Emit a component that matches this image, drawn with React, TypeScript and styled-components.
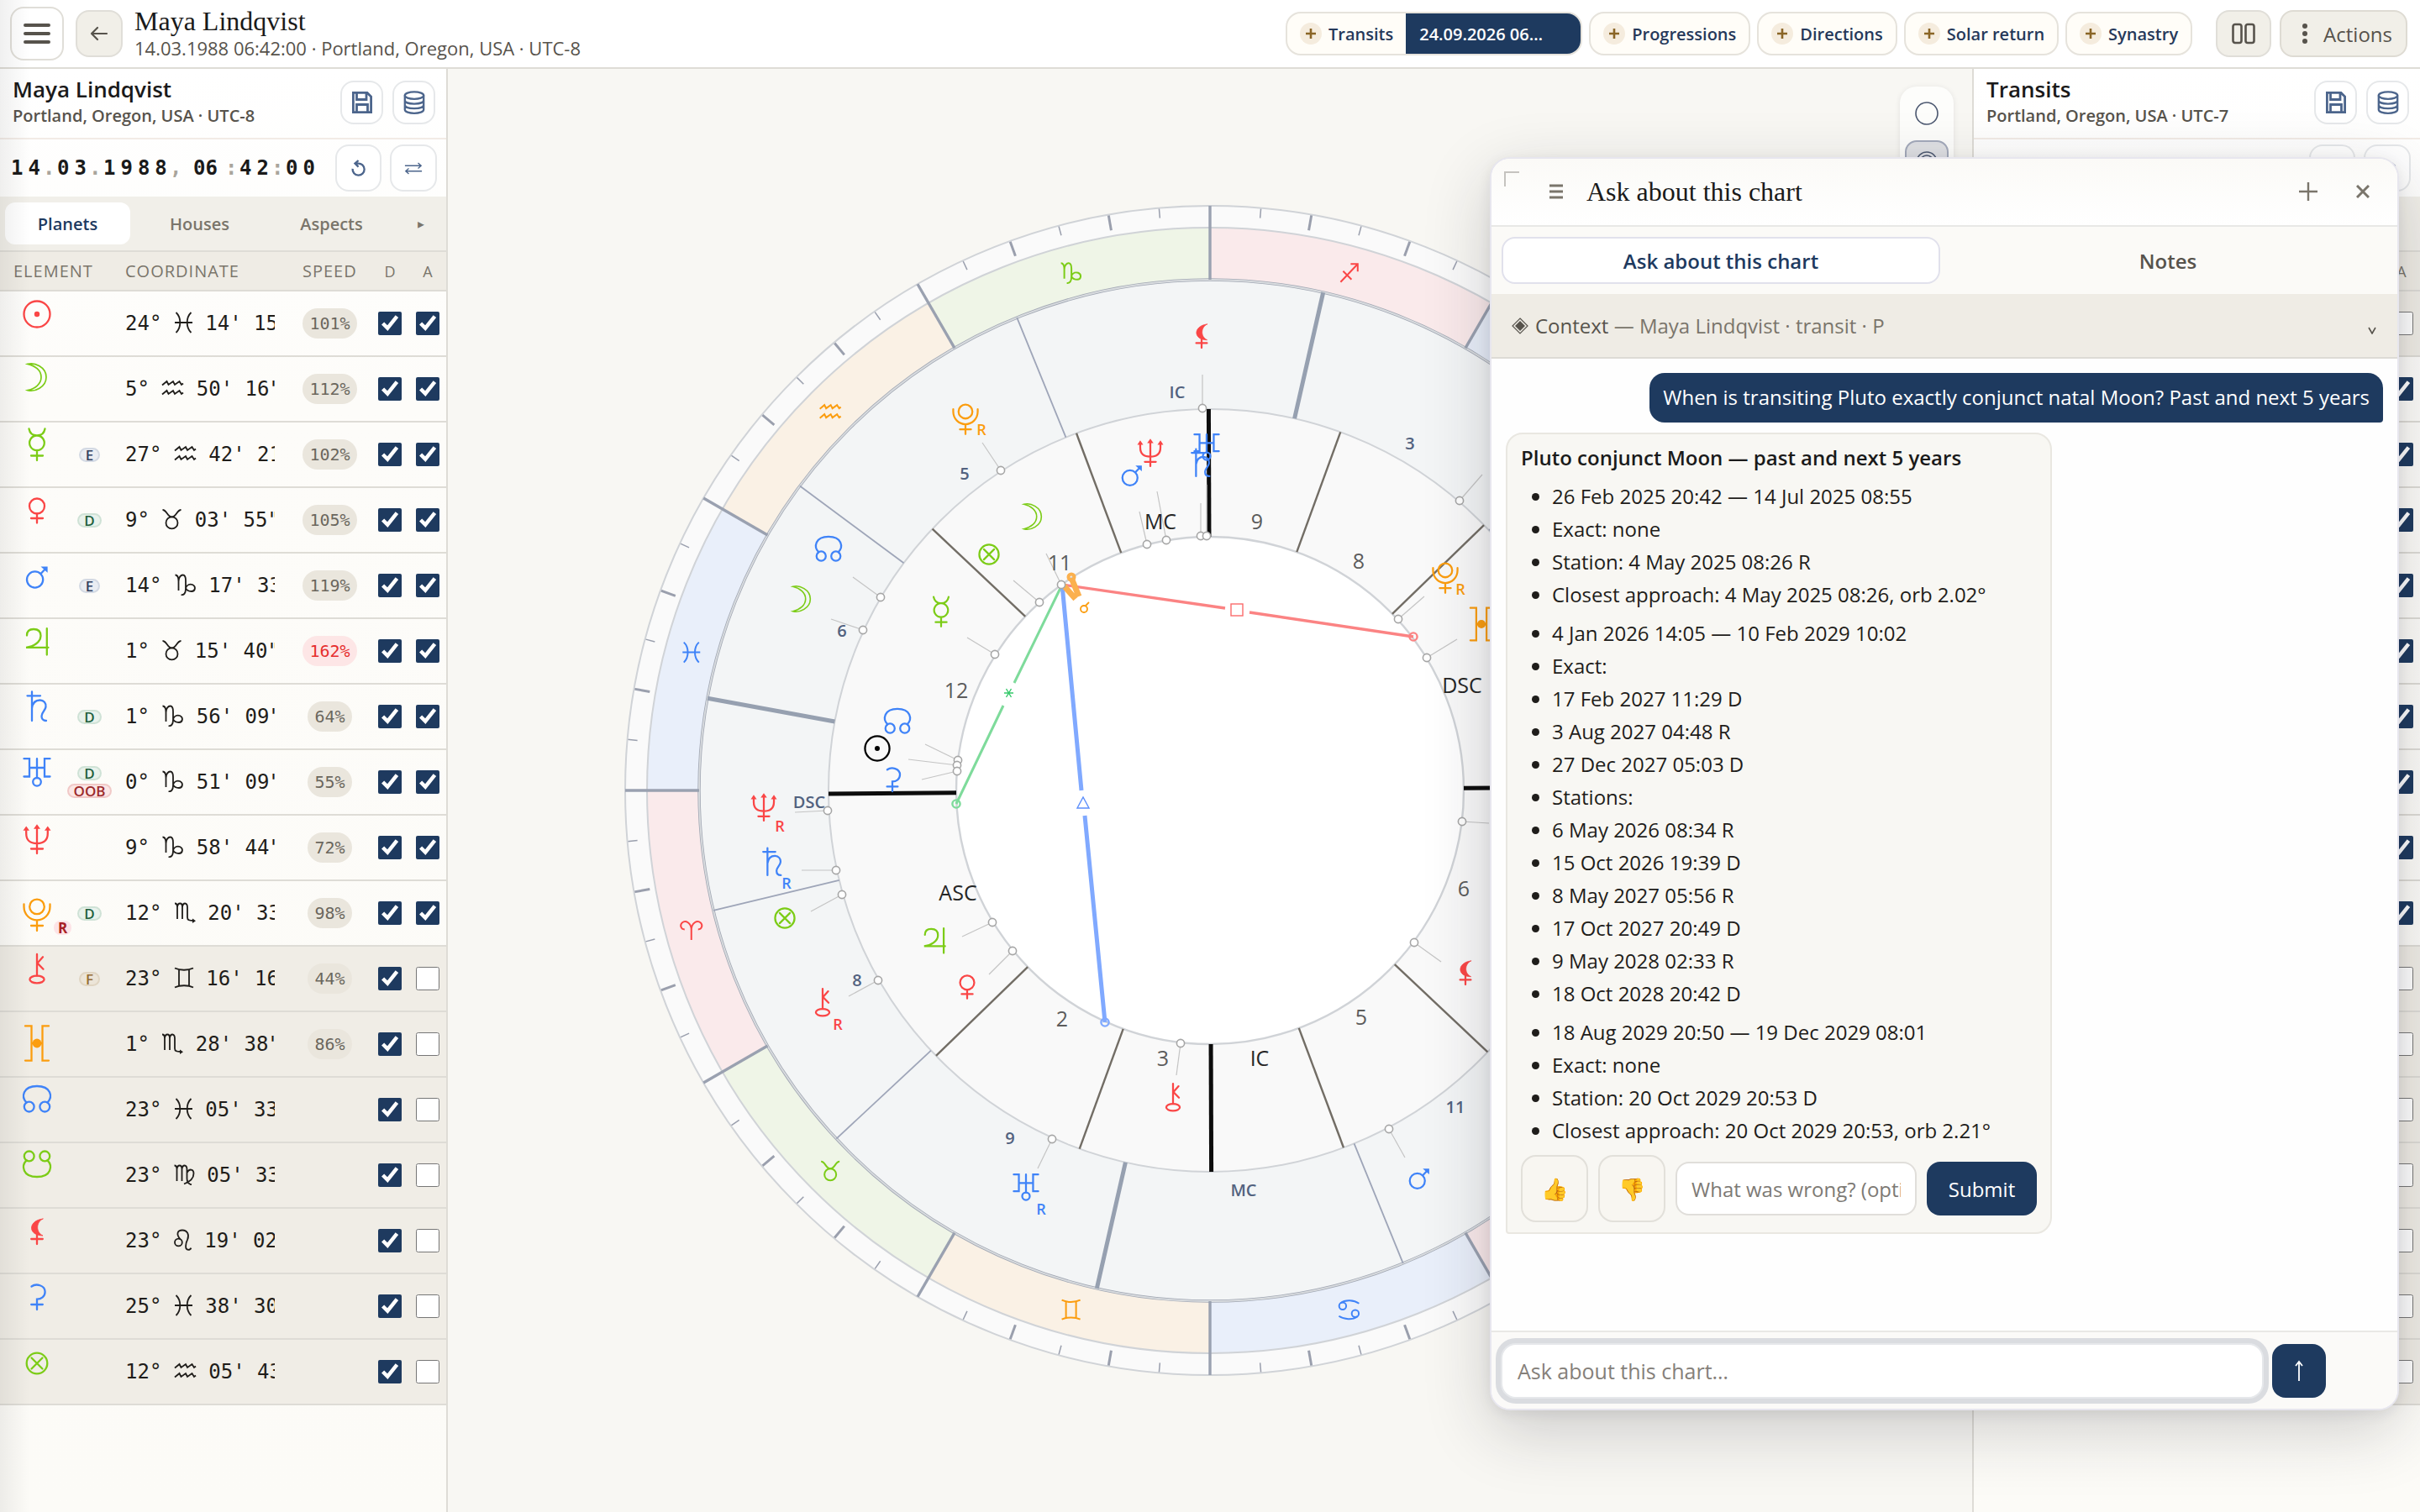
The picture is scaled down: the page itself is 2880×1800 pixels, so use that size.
import React from 'react';
import styled, { createGlobalStyle, css } from 'styled-components';

const ink = '#1f1d1a';
const soft = '#57534c';
const muted = '#7a756b';
const navy = '#1e3a5f';
const rule = '#dedcd6';
const sans = '"Open Sans", "Noto Sans", sans-serif';
const serif = '"Liberation Serif", serif';
const mono = '"DejaVu Sans Mono", monospace';

const RED = '#fa4646';
const GREEN = '#7ccc17';
const BLUE = '#3f83f8';
const ORANGE = '#fb9d0f';

const GlobalStyle = createGlobalStyle`
  *, *::before, *::after { box-sizing: border-box; }
  html, body { margin: 0; }
  body { background: #f8f7f3; color: ${ink}; font-family: ${sans}; overflow: hidden; }
  button, input, textarea { font-family: inherit; color: inherit; margin: 0; }
  button { cursor: pointer; padding: 0; }
  svg { display: block; flex: none; }
`;

/* ---------- glyphs ---------- */

const GLYPHS: Record<string, React.ReactNode> = {
  sun: (<><circle r="15.5" /><circle r="3.2" fill="currentColor" stroke="none" /></>),
  moon: <path d="M-11 -15.6 C-3 -18 11 -12 11 0 C11 12 -3 18 -11 15.6 C-2 13.5 5 8 5 0 C5 -8 -2 -13.5 -11 -15.6Z" strokeWidth="1.7" />,
  mercury: <path d="M-9.5 -18.5 C-8.5 -13 -5 -10.5 0 -10.5 C5 -10.5 8.5 -13 9.5 -18.5 M0 7 V19 M-7 13.5 H7 M0 -10.5 A8.8 8.8 0 1 1 -0.1 -10.5" />,
  venus: (<><circle cy="-5.5" r="9" /><path d="M0 3.5 V14.5 M-7 9 H7" /></>),
  mars: (<><circle cx="-2.4" cy="3" r="9.6" /><path d="M4.5 -4 L10 -9.8" /><path d="M4.5 -12.6 H12.6 V-5.2 Z" fill="currentColor" stroke="none" /></>),
  jupiter: <path d="M-12 -7.5 C-12 -12.5 -9 -15 -4 -15 C1.5 -15 4.5 -12 4.5 -7 C4.5 0 -4 6 -13 6.8 H13.5 M11.8 -15.8 V15.5" />,
  saturn: <path d="M-11.5 -12.7 H4 M-6 -17.5 V17 M-6 2 C-5 -5 -1 -7.5 3.5 -7.5 C8 -7.5 11 -4 10.5 0.5 C10 5 5.5 7 5.5 11.5 C5.5 15.5 7 17 11 17" />,
  uranus: (<><path d="M-15.5 -15.8 H-9 V5.5 H-15.5 M15.5 -15.8 H9 V5.5 H15.5 M-9 -5 H9 M0 -15.8 V7" /><circle cy="11.8" r="4.8" /></>),
  neptune: (<><path d="M0 -13 V17 M-7 11.5 H7 M-12.8 -10 V-7 C-12.8 2 -8 5 0 5 C8 5 12.8 2 12.8 -7 V-10" /><path d="M-16.5 -10.2 L-12.8 -15.6 L-9 -10.2Z M-4 -12.2 L0 -17.8 L4 -12.2Z M9 -10.2 L12.8 -15.6 L16.5 -10.2Z" fill="currentColor" stroke="none" /></>),
  pluto: (<><circle cy="-9.6" r="8.8" /><path d="M-15.5 -12.5 V-9.5 C-15.5 0 -8 6.4 0 6.4 C8 6.4 15.5 0 15.5 -9.5 V-12.5 M0 6.4 V19 M-7 13 H7" /></>),
  chiron: (<><ellipse cy="13" rx="8.6" ry="4.4" /><path d="M0 8.6 V-17 M7 -13.7 L0.5 -6.4 L7.5 0.8" /></>),
  selena: (<><path d="M-14 -20.6 H-6.5 V20.6 H-14 M14 -20.6 H6.5 V20.6 H14 M-6 0 H6" /><circle r="5.4" fill="currentColor" stroke="none" /></>),
  northNode: (<><circle cx="-9.3" cy="9.6" r="5.9" /><circle cx="9.3" cy="9.6" r="5.9" /><path d="M-12.5 4.6 C-19 -2 -17 -15 0 -15 C17 -15 19 -2 12.5 4.6" /></>),
  southNode: (<><circle cx="-9.3" cy="-9.6" r="5.9" /><circle cx="9.3" cy="-9.6" r="5.9" /><path d="M-12.5 -4.6 C-19 2 -17 15 0 15 C17 15 19 2 12.5 -4.6" /></>),
  lilith: (<><path d="M7 -15 C-11 -13 -11 5 7 5 C-1.5 1 -1.5 -11 7 -15Z" fill="currentColor" strokeWidth="0.8" /><path d="M0 4 V15 M-6.8 9 H6.8" /></>),
  ceres: <path d="M-6.5 -12.5 C-1 -16.5 9.6 -14 9.6 -6 C9.6 -0.5 5 2.6 0 2.6 V15 M-6.8 9 H6.8" />,
  fortune: (<><circle r="12.3" /><path d="M-6.5 -6.5 L6.5 6.5 M6.5 -6.5 L-6.5 6.5" /></>),
};

const M_STEMS = 'M-12 -10.5 C-9.5 -10.5 -9 -9 -9 -6 V8 M-9 -6 C-8.4 -12 -3 -12 -3 -6 V8 M-3 -6 C-2.4 -12 3 -12 3 -6';

const SIGNS: Record<string, { w: number; d: React.ReactNode }> = {
  aries: { w: 27, d: <path d="M-8 -1 C-12.5 -1 -14 -6 -11 -9 C-7 -12.5 0 -9 0 0 V11.5 M0 0 C0 -9 7 -12.5 11 -9 C14 -6 12.5 -1 8 -1" /> },
  taurus: { w: 25, d: (<><circle cy="4.4" r="7" /><path d="M-11 -11 C-6 -11 -5.5 -2.6 0 -2.6 C5.5 -2.6 6 -11 11 -11" /></>) },
  gemini: { w: 24, d: <path d="M-11 -11.5 C-5 -8.5 5 -8.5 11 -11.5 M-11 11.5 C-5 8.5 5 8.5 11 11.5 M-6 -9.5 V9.5 M6 -9.5 V9.5" /> },
  cancer: { w: 27, d: (<><circle cx="-7.5" cy="-4.5" r="4.2" /><circle cx="7.5" cy="4.5" r="4.2" /><path d="M-10 -8 C-4 -12.5 6 -11.5 12 -7.5 M10 8 C4 12.5 -6 11.5 -12 7.5" /></>) },
  leo: { w: 22, d: (<><circle cx="-5.6" cy="3" r="4.4" /><path d="M-3.4 -0.6 C-9 -7 -6.5 -11.5 -1 -11.5 C5 -11.5 7.5 -6 5.2 -0.6 C3 4 1.5 11.5 6 11.8 C8 11.8 9 10.8 9.4 9.6" /></>) },
  virgo: { w: 25, d: <path d={`${M_STEMS} V5 C3 9 5 11.5 8.5 12.4 M3 -2 C6 -7.5 11 -6 11 -1 C11 4.5 6 9 -0.5 11.5`} /> },
  scorpio: { w: 26, d: (<><path d={`${M_STEMS} V6 C3 9.5 5 10 10 10`} /><path d="M9 7.4 L13 10.2 L9 13Z" fill="currentColor" stroke="none" /></>) },
  sagittarius: { w: 24, d: <path d="M-10 11 L10 -10 M2 -10.4 H10.4 V-1.5 M-7 -2 L3 8" /> },
  capricorn: { w: 27, d: <path d="M-12 -11.5 C-9 -11.5 -8 -8.5 -8 -4 V7 M-8 -4 C-8 -9 -5 -11.5 -3 -11.5 C-0.5 -11.5 0.5 -9 0.5 -5 V5 C0.5 10 -1.5 12.5 -5 12.3 M0.5 4 C2 -0.5 6 -0.8 8.5 0 C13 2 12 8 7.5 8 C4 8 1.5 6.5 0.5 4" /> },
  aquarius: { w: 27, d: <path d="M-12.5 -3.5 L-7 -8 L-5 -4 L0.5 -8 L2.5 -4 L8 -8 L10.5 -4 L12.5 -5.5 M-12.5 7.5 L-7 3 L-5 7 L0.5 3 L2.5 7 L8 3 L10.5 7 L12.5 5.5" /> },
  pisces: { w: 23, d: <path d="M-9 -12 C-2.6 -6 -2.6 6 -9 12 M9 -12 C2.6 -6 2.6 6 9 12 M-10.5 0 H10.5" /> },
};

/* ---------- header ---------- */

const Page = styled.div`
  position: relative;
  min-height: 100vh;
  display: grid;
  grid-template-rows: auto 1fr;
  &::after {
    content: '';
    position: absolute;
    inset: 0 auto 0 0;
    width: 36px;
    background: linear-gradient(90deg, rgba(0, 0, 0, 0.06), transparent);
    pointer-events: none;
  }
`;

const Header = styled.header`
  display: flex;
  align-items: center;
  height: 82px;
  padding: 0 15px 0 12px;
  background: #fff;
  border-bottom: 2px solid ${rule};
`;

const LeadingButtons = styled.div`
  display: flex;
  align-items: center;
  gap: 14px;
`;

const SquareButton = styled.button<{ $w: number; $h: number; $tint?: boolean }>`
  display: flex;
  align-items: center;
  justify-content: center;
  width: ${p => p.$w}px;
  height: ${p => p.$h}px;
  border: 2px solid #e0ded8;
  border-radius: 16px;
  background: ${p => (p.$tint ? '#f1efe8' : '#fff')};
  color: ${soft};
`;

const Identity = styled.div`
  flex: 1;
  margin-left: 14px;
`;

const PersonName = styled.h1`
  margin: 0;
  font: 400 32px/34px ${serif};
  color: #1a1a1a;
`;

const PersonMeta = styled.p`
  margin: 0;
  font-size: 22px;
  line-height: 30px;
  color: ${soft};
`;

const Pills = styled.nav`
  display: flex;
  gap: 8px;
  margin-right: 28px;
`;

const PillGroup = styled.div`
  display: flex;
  height: 52px;
  border: 2px solid #e6e3dc;
  border-radius: 18px;
  background: #fffdf8;
  overflow: hidden;
`;

const PillButton = styled.button`
  display: flex;
  align-items: center;
  gap: 8px;
  padding: 0 15px;
  border: 0;
  background: none;
  font-size: 20px;
  font-weight: 600;
  color: #26395a;
`;

const PillDate = styled.button`
  width: 208px;
  padding: 0 16px;
  border: 0;
  background: ${navy};
  font-size: 20px;
  font-weight: 600;
  text-align: left;
  color: #fff;
`;

const PlusDot = styled.span`
  display: flex;
  align-items: center;
  justify-content: center;
  width: 26px;
  height: 26px;
  border-radius: 50%;
  background: #f5ecde;
  color: #8a6526;
`;

const ActionsButton = styled.button`
  display: flex;
  align-items: center;
  gap: 18px;
  height: 56px;
  margin-left: 10px;
  padding: 0 16px 0 24px;
  border: 2px solid #dedbd3;
  border-radius: 16px;
  background: #f1efe8;
  font-size: 24px;
  color: ${soft};
`;

function Plus() {
  return (
    <PlusDot>
      <svg width="12" height="12" viewBox="0 0 12 12" stroke="currentColor" strokeWidth="2.6"><path d="M6 0 V12 M0 6 H12" /></svg>
    </PlusDot>
  );
}

function TopBar() {
  return (
    <Header>
      <LeadingButtons>
        <SquareButton $w={64} $h={64} aria-label="Menu">
          <svg width="32" height="26" viewBox="0 0 32 26" stroke="currentColor" strokeWidth="4" strokeLinecap="round">
            <path d="M2 3 H30 M2 13 H30 M2 23 H30" />
          </svg>
        </SquareButton>
        <SquareButton $w={56} $h={56} $tint aria-label="Back">
          <svg width="22" height="18" viewBox="0 0 22 18" fill="none" stroke="currentColor" strokeWidth="2.2" strokeLinecap="round" strokeLinejoin="round">
            <path d="M20 9 H2 M9 2 L2 9 L9 16" />
          </svg>
        </SquareButton>
      </LeadingButtons>
      <Identity>
        <PersonName>Maya Lindqvist</PersonName>
        <PersonMeta>14.03.1988 06:42:00 · Portland, Oregon, USA · UTC-8</PersonMeta>
      </Identity>
      <Pills aria-label="Chart layers">
        <PillGroup>
          <PillButton><Plus />Transits</PillButton>
          <PillDate>24.09.2026 06…</PillDate>
        </PillGroup>
        {['Progressions', 'Directions', 'Solar return', 'Synastry'].map(name => (
          <PillGroup key={name}><PillButton><Plus />{name}</PillButton></PillGroup>
        ))}
      </Pills>
      <SquareButton $w={66} $h={56} $tint aria-label="Columns">
        <svg width="28" height="26" viewBox="0 0 28 26" fill="none" stroke="currentColor" strokeWidth="2.6">
          <rect x="1.5" y="2" width="10" height="22" rx="2.5" /><rect x="16.5" y="2" width="10" height="22" rx="2.5" />
        </svg>
      </SquareButton>
      <ActionsButton>
        <svg width="8" height="26" viewBox="0 0 8 26" fill="currentColor">
          <circle cx="4" cy="4" r="3" /><circle cx="4" cy="13" r="3" /><circle cx="4" cy="22" r="3" />
        </svg>
        Actions
      </ActionsButton>
    </Header>
  );
}

/* ---------- side panels ---------- */

const Main = styled.main`
  display: grid;
  grid-template-columns: 533px 1fr 533px;
`;

const Panel = styled.aside<{ $side: 'left' | 'right' }>`
  background: linear-gradient(#fff, #fdfcf9 400px, #fcfbf7);
  ${p => (p.$side === 'left' ? css`border-right: 2px solid ${rule};` : css`border-left: 2px solid ${rule};`)}
`;

const PanelHead = styled.div`
  display: flex;
  align-items: center;
  gap: 11px;
  height: 84px;
  padding: 0 13px 2px 15px;
  border-bottom: 2px solid #f2ebe6;
`;

const PanelTitles = styled.div`
  flex: 1;
`;

const PanelTitle = styled.h2`
  margin: 0;
  font-size: 26px;
  font-weight: 600;
  line-height: 32px;
  color: #1a1a1a;
`;

const PanelPlace = styled.p`
  margin: 0;
  font-size: 20px;
  font-weight: 600;
  line-height: 32px;
  color: ${soft};
`;

const ToolButton = styled.button<{ $w: number; $h: number }>`
  display: flex;
  align-items: center;
  justify-content: center;
  width: ${p => p.$w}px;
  height: ${p => p.$h}px;
  border: 2px solid #e6e8ea;
  border-radius: 16px;
  background: #fff;
  color: #4c658c;
`;

const DateRow = styled.div`
  display: flex;
  align-items: center;
  gap: 10px;
  height: 68px;
  padding: 0 11px 0 13px;
`;

const DateFields = styled.div`
  display: flex;
  flex: 1;
  align-items: center;
  font: 700 24px/32px ${mono};
`;

const DateField = styled.input<{ $w: number; $tight?: boolean }>`
  width: ${p => p.$w}px;
  padding: 0;
  border: 0;
  outline: 0;
  background: none;
  font: inherit;
  letter-spacing: ${p => (p.$tight ? 0 : 6)}px;
  color: #1a1a1a;
`;

const Separator = styled.span<{ $w: number }>`
  width: ${p => p.$w}px;
  color: #a9a59c;
`;

const TabBar = styled.div`
  display: flex;
  align-items: center;
  gap: 8px;
  height: 66px;
  padding: 0 6px;
  background: #f1efe9;
  border-bottom: 2px solid ${rule};
`;

const PanelTab = styled.button<{ $active?: boolean }>`
  width: 149px;
  height: 50px;
  border: 0;
  border-radius: 12px;
  background: ${p => (p.$active ? '#fff' : 'none')};
  font-size: 20px;
  font-weight: 600;
  color: ${p => (p.$active ? navy : muted)};
`;

const MoreTabs = styled.button`
  flex: 1;
  border: 0;
  background: none;
  font: 20px/20px ${mono};
  color: ${muted};
`;

const Table = styled.table`
  width: 100%;
  table-layout: fixed;
  border-collapse: separate;
  border-spacing: 0;
`;

const HeadCell = styled.th<{ $w?: number; $pad?: number; $center?: boolean }>`
  width: ${p => (p.$w ? p.$w + 'px' : 'auto')};
  height: 47px;
  padding: 0 0 0 ${p => p.$pad ?? 0}px;
  background: #efece5;
  border-bottom: 2px solid ${rule};
  font-size: ${p => (p.$center ? 18 : 20)}px;
  font-weight: 400;
  letter-spacing: ${p => (p.$center ? 0 : 1)}px;
  text-align: ${p => (p.$center ? 'center' : 'left')};
  color: ${muted};
`;

const Row = styled.tr<{ $dim?: boolean }>`
  background: ${p => (p.$dim ? '#f0ede6' : 'transparent')};
`;

const Cell = styled.td<{ $pad?: number; $center?: boolean }>`
  height: 78px;
  padding: 0 0 0 ${p => p.$pad ?? 0}px;
  border-bottom: 2px solid ${rule};
  text-align: ${p => (p.$center ? 'center' : 'left')};
`;

const ElementBox = styled.div`
  position: relative;
  display: flex;
  align-items: center;
  height: 76px;
  padding-left: 16px;
`;

const Badges = styled.div`
  display: flex;
  flex: 1;
  flex-direction: column;
  align-items: center;
  gap: 4px;
  margin-left: 7px;
`;

const badgeTones = {
  green: css`background: #e9f2ec; border-color: #cfe2d6; color: #22603d;`,
  blue: css`background: #eaedf2; border-color: #d3d9e3; color: #33415f;`,
  red: css`background: #fbe7e6; border-color: #f1c9c7; color: #9c2b2b;`,
  tan: css`background: #ece5d8; border-color: #e0d5c2; color: #946a34;`,
};

type Tone = keyof typeof badgeTones;

const Badge = styled.span<{ $tone: Tone }>`
  height: 17px;
  padding: 0 6px;
  border: 2px solid;
  border-radius: 9px;
  font-size: 17px;
  font-weight: 600;
  line-height: 13px;
  ${p => badgeTones[p.$tone]}
`;

const RetroBadge = styled.span`
  position: absolute;
  left: 64px;
  top: 47px;
  padding: 0 5px;
  border-radius: 8px;
  background: #fde3e6;
  font-size: 17px;
  font-weight: 700;
  line-height: 17px;
  color: #a81f24;
`;

const Coordinate = styled.div`
  width: 178px;
  overflow: hidden;
  white-space: pre;
  font: 24px/32px ${mono};
  color: ${ink};
  svg { display: inline-block; vertical-align: -4px; }
`;

const Speed = styled.span<{ $fast?: boolean }>`
  display: inline-block;
  padding: 0 8px;
  border-radius: 18px;
  background: ${p => (p.$fast ? '#fde6e6' : '#eae6dd')};
  font: 20px/36px ${mono};
  color: ${p => (p.$fast ? '#e62e2e' : '#6b675d')};
`;

const Tick = styled.input`
  display: block;
  width: 28px;
  height: 28px;
  margin: 0 auto;
  accent-color: ${navy};
`;

type Body = {
  glyph: string;
  color: string;
  cy: number;
  badges?: [string, Tone][];
  retro?: boolean;
  deg: string;
  sign: string;
  min: string;
  speed?: string;
  aspects: boolean;
};

const BODIES: Body[] = [
  { glyph: 'sun', color: RED, cy: 27, deg: '24°', sign: 'pisces', min: "14' 15\"", speed: '101%', aspects: true },
  { glyph: 'moon', color: GREEN, cy: 24, deg: '5°', sign: 'aquarius', min: "50' 16\"", speed: '112%', aspects: true },
  { glyph: 'mercury', color: GREEN, cy: 26, badges: [['E', 'blue']], deg: '27°', sign: 'aquarius', min: "42' 21\"", speed: '102%', aspects: true },
  { glyph: 'venus', color: RED, cy: 27, badges: [['D', 'green']], deg: '9°', sign: 'taurus', min: "03' 55\"", speed: '105%', aspects: true },
  { glyph: 'mars', color: BLUE, cy: 28, badges: [['E', 'blue']], deg: '14°', sign: 'capricorn', min: "17' 33\"", speed: '119%', aspects: true },
  { glyph: 'jupiter', color: GREEN, cy: 27, deg: '1°', sign: 'taurus', min: "15' 40\"", speed: '162%', aspects: true },
  { glyph: 'saturn', color: BLUE, cy: 26, badges: [['D', 'green']], deg: '1°', sign: 'capricorn', min: "56' 09\"", speed: '64%', aspects: true },
  { glyph: 'uranus', color: BLUE, cy: 26, badges: [['D', 'green'], ['OOB', 'red']], deg: '0°', sign: 'capricorn', min: "51' 09\"", speed: '55%', aspects: true },
  { glyph: 'neptune', color: RED, cy: 28, deg: '9°', sign: 'capricorn', min: "58' 44\"", speed: '72%', aspects: true },
  { glyph: 'pluto', color: ORANGE, cy: 40, badges: [['D', 'green']], retro: true, deg: '12°', sign: 'scorpio', min: "20' 33\"", speed: '98%', aspects: true },
  { glyph: 'chiron', color: RED, cy: 26, badges: [['F', 'tan']], deg: '23°', sign: 'gemini', min: "16' 16\"", speed: '44%', aspects: false },
  { glyph: 'selena', color: ORANGE, cy: 37, deg: '1°', sign: 'scorpio', min: "28' 38\"", speed: '86%', aspects: false },
  { glyph: 'northNode', color: BLUE, cy: 25, deg: '23°', sign: 'pisces', min: "05' 33\"", aspects: false },
  { glyph: 'southNode', color: GREEN, cy: 25, deg: '23°', sign: 'virgo', min: "05' 33\"", aspects: false },
  { glyph: 'lilith', color: RED, cy: 27, deg: '23°', sign: 'leo', min: "19' 02\"", aspects: false },
  { glyph: 'ceres', color: BLUE, cy: 27, deg: '25°', sign: 'pisces', min: "38' 30\"", aspects: false },
  { glyph: 'fortune', color: GREEN, cy: 28, deg: '12°', sign: 'aquarius', min: "05' 43\"", aspects: false },
];

function Heading({ title, place }: { title: string; place: string }) {
  return (
    <PanelHead>
      <PanelTitles>
        <PanelTitle>{title}</PanelTitle>
        <PanelPlace>{place}</PanelPlace>
      </PanelTitles>
      <ToolButton $w={51} $h={52} aria-label="Save chart">
        <svg width="24" height="26" viewBox="0 0 24 26" fill="none" stroke="currentColor" strokeWidth="2.8">
          <path d="M1.4 1.4 H18 L22.6 6 V24.6 H1.4 Z M5.5 1.4 V9.5 H17 V1.4 M5.5 24.6 V15.5 H18.5 V24.6" />
        </svg>
      </ToolButton>
      <ToolButton $w={51} $h={52} aria-label="Chart database">
        <svg width="26" height="28" viewBox="0 0 26 28" fill="none" stroke="currentColor" strokeWidth="2.3">
          <ellipse cx="13" cy="5.6" rx="11.2" ry="4.2" />
          <path d="M1.8 5.6 V22.4 C1.8 25 7 26.8 13 26.8 C19 26.8 24.2 25 24.2 22.4 V5.6 M1.8 11.2 C1.8 14 7 15.6 13 15.6 C19 15.6 24.2 14 24.2 11.2 M1.8 16.8 C1.8 19.6 7 21.2 13 21.2 C19 21.2 24.2 19.6 24.2 16.8" />
        </svg>
      </ToolButton>
    </PanelHead>
  );
}

function DateTools() {
  return (
    <>
      <ToolButton $w={55} $h={56} aria-label="Reset time">
        <svg width="18" height="20" viewBox="0 0 20 22" fill="none" stroke="currentColor" strokeWidth="2.6">
          <path d="M1.8 12 A7.8 7.8 0 1 0 9 5 H5 M9.5 1 L5 5 L9.5 9.4" />
        </svg>
      </ToolButton>
      <ToolButton $w={56} $h={56} aria-label="Swap charts">
        <svg width="22" height="15" viewBox="0 0 24 16" fill="none" stroke="currentColor" strokeWidth="1.5">
          <path d="M1 4.5 H22 M18 1 L22 4.5 L18 8 M23 11.5 H2 M6 8 L2 11.5 L6 15" />
        </svg>
      </ToolButton>
    </>
  );
}

function NatalPanel() {
  return (
    <Panel $side="left">
      <Heading title="Maya Lindqvist" place="Portland, Oregon, USA · UTC-8" />
      <DateRow>
        <DateFields>
          <DateField $w={38} aria-label="Day" defaultValue="14" /><Separator $w={17}>.</Separator>
          <DateField $w={38} aria-label="Month" defaultValue="03" /><Separator $w={17}>.</Separator>
          <DateField $w={79} aria-label="Year" defaultValue="1988" /><Separator $w={28}>,</Separator>
          <DateField $w={38} $tight aria-label="Hour" defaultValue="06" /><Separator $w={17}>:</Separator>
          <DateField $w={38} aria-label="Minute" defaultValue="42" /><Separator $w={17}>:</Separator>
          <DateField $w={38} aria-label="Second" defaultValue="00" />
        </DateFields>
        <DateTools />
      </DateRow>
      <TabBar role="tablist">
        <PanelTab role="tab" aria-selected $active>Planets</PanelTab>
        <PanelTab role="tab">Houses</PanelTab>
        <PanelTab role="tab">Aspects</PanelTab>
        <MoreTabs aria-label="More tabs">▸</MoreTabs>
      </TabBar>
      <Table>
        <thead>
          <tr>
            <HeadCell $w={134} $pad={16}>ELEMENT</HeadCell>
            <HeadCell $w={210} $pad={15}>COORDINATE</HeadCell>
            <HeadCell $w={97} $pad={16}>SPEED</HeadCell>
            <HeadCell $w={46} $center>D</HeadCell>
            <HeadCell $center>A</HeadCell>
          </tr>
        </thead>
        <tbody>
          {BODIES.map(b => {
            const sign = SIGNS[b.sign];
            return (
              <Row key={b.glyph} $dim={!b.aspects}>
                <Cell>
                  <ElementBox>
                    <svg width="56" height="76" viewBox="-28 0 56 76" fill="none" stroke={b.color} color={b.color} strokeWidth="2.3" strokeLinecap="round" role="img" aria-label={b.glyph}>
                      <g transform={`translate(0 ${b.cy})`}>{GLYPHS[b.glyph]}</g>
                    </svg>
                    {b.retro && <RetroBadge>R</RetroBadge>}
                    <Badges>
                      {b.badges?.map(([label, tone]) => <Badge key={label} $tone={tone}>{label}</Badge>)}
                    </Badges>
                  </ElementBox>
                </Cell>
                <Cell $pad={15}>
                  <Coordinate>
                    {b.deg + ' '}
                    <svg width={sign.w} height="26" viewBox={`${-sign.w / 2} -13 ${sign.w} 26`} fill="none" stroke={ink} color={ink} strokeWidth="1.8">{sign.d}</svg>
                    {' ' + b.min}
                  </Coordinate>
                </Cell>
                <Cell $center>{b.speed && <Speed $fast={b.speed === '162%'}>{b.speed}</Speed>}</Cell>
                <Cell><Tick type="checkbox" aria-label={`Display ${b.glyph}`} defaultChecked /></Cell>
                <Cell><Tick type="checkbox" aria-label={`Aspects of ${b.glyph}`} defaultChecked={b.aspects} /></Cell>
              </Row>
            );
          })}
        </tbody>
      </Table>
    </Panel>
  );
}

function TransitPanel() {
  return (
    <Panel $side="right">
      <Heading title="Transits" place="Portland, Oregon, USA · UTC-7" />
      <DateRow>
        <DateFields />
        <DateTools />
      </DateRow>
      <TabBar />
      <Table>
        <thead>
          <tr>
            <HeadCell $w={487} />
            <HeadCell $center>A</HeadCell>
          </tr>
        </thead>
        <tbody>
          {BODIES.map((b, i) => (
            <Row key={b.glyph} $dim={!b.aspects || i === 0}>
              <Cell />
              <Cell><Tick type="checkbox" aria-label={`Transit aspects of ${b.glyph}`} defaultChecked={b.aspects && i > 0} /></Cell>
            </Row>
          ))}
        </tbody>
      </Table>
    </Panel>
  );
}

/* ---------- chart wheel ---------- */

const CX = 1440;
const CY = 941;
const R_OUTER = 696;
const R_ZODIAC = 670;
const R_TRANSIT = 608;
const R_NATAL = 454;
const R_CORE = 302;

const at = (deg: number, r: number): [number, number] => {
  const a = (deg * Math.PI) / 180;
  return [CX - r * Math.cos(a), CY + r * Math.sin(a)];
};

const spoke = (deg: number, r1: number, r2: number) => {
  const [x1, y1] = at(deg, r1);
  const [x2, y2] = at(deg, r2);
  return `M${x1} ${y1} L${x2} ${y2}`;
};

const sector = (from: number, to: number, r1: number, r2: number) => {
  const [ax, ay] = at(from, r2);
  const [bx, by] = at(to, r2);
  const [cx, cy] = at(to, r1);
  const [dx, dy] = at(from, r1);
  return `M${ax} ${ay} A${r2} ${r2} 0 0 0 ${bx} ${by} L${cx} ${cy} A${r1} ${r1} 0 0 1 ${dx} ${dy}Z`;
};

const ZODIAC: [string, string, string][] = [
  ['aries', RED, '#faeaeb'], ['taurus', GREEN, '#eff5e7'], ['gemini', ORANGE, '#faf1e5'], ['cancer', BLUE, '#e9effa'],
  ['leo', RED, '#faeaeb'], ['', GREEN, '#eff5e7'], ['', ORANGE, '#faf1e5'], ['', BLUE, '#e9effa'],
  ['sagittarius', RED, '#faeaeb'], ['capricorn', GREEN, '#eff5e7'], ['aquarius', ORANGE, '#faf1e5'], ['pisces', BLUE, '#e9effa'],
];

const NATAL_CUSPS = [44.1, 70, 110.5, 136.7, 224.1, 250, 290.5, 316.7];
const TRANSIT_CUSPS = [13.6, 43, 112.2, 143.4, 193.6, 223, 292.2, 323.4];

/* glyph, colour, x, y, optional position of the retrograde mark */
const PLACED: [string, string, number, number, number?, number?][] = [
  ['lilith', RED, 1430, 400],
  ['pluto', ORANGE, 1149, 499, 1168, 511],
  ['northNode', BLUE, 986, 653],
  ['moon', GREEN, 954, 713],
  ['neptune', RED, 909, 961, 928, 983],
  ['saturn', BLUE, 919, 1026, 936, 1051],
  ['fortune', GREEN, 934, 1093],
  ['chiron', RED, 979, 1193, 997, 1219],
  ['uranus', BLUE, 1221, 1413, 1239, 1439],
  ['mars', BLUE, 1689, 1403],
  ['neptune', RED, 1369, 539],
  ['mars', BLUE, 1347, 566],
  ['uranus', BLUE, 1436, 532],
  ['saturn', BLUE, 1429, 551],
  ['moon', GREEN, 1229, 615],
  ['fortune', GREEN, 1177, 660],
  ['mercury', GREEN, 1120, 728],
  ['northNode', BLUE, 1068, 858],
  ['sun', '#000', 1044, 891],
  ['ceres', BLUE, 1062, 928],
  ['jupiter', GREEN, 1112, 1120],
  ['venus', RED, 1151, 1175],
  ['chiron', RED, 1396, 1306],
  ['pluto', ORANGE, 1720, 688, 1738, 701],
  ['selena', ORANGE, 1763, 743],
  ['lilith', RED, 1744, 1158],
];

/* ring point x, y, then the far end of its leader */
const LEADERS: [number, number, number, number][] = [
  [1431, 486, 1431, 446], [1191, 560, 1169, 527], [1048, 711, 1015, 687], [1027, 750, 989, 737],
  [985, 965, 946, 967], [995, 1036, 954, 1036], [1002, 1065, 965, 1085], [1045, 1167, 1010, 1186],
  [1252, 1356, 1235, 1391], [1653, 1344, 1672, 1378], [1737, 596, 1764, 565],
  [1365, 648, 1356, 609], [1388, 643, 1377, 585], [1429, 638, 1429, 599], [1436, 638, 1436, 577],
  [1263, 696, 1245, 659], [1237, 717, 1206, 691], [1184, 779, 1151, 759], [1140, 905, 1101, 886],
  [1139, 911, 1081, 904], [1139, 918, 1097, 928], [1181, 1098, 1145, 1115], [1205, 1132, 1177, 1160],
  [1405, 1242, 1400, 1280], [1664, 737, 1695, 710], [1698, 783, 1734, 761], [1740, 978, 1772, 980],
  [1683, 1122, 1715, 1145],
];

const NATAL_LABELS: [string, number, number][] = [
  ['MC', 1381, 620], ['11', 1261, 669], ['12', 1138, 821], ['ASC', 1140, 1062], ['2', 1264, 1212], ['3', 1384, 1259],
  ['IC', 1499, 1259], ['5', 1620, 1210], ['6', 1742, 1057], ['DSC', 1740, 815], ['8', 1617, 667], ['9', 1496, 620],
];

const TRANSIT_LABELS: [string, number, number][] = [
  ['IC', 1401, 466], ['5', 1148, 563], ['6', 1002, 750], ['DSC', 963, 954], ['8', 1020, 1166], ['9', 1202, 1354],
  ['MC', 1480, 1416], ['11', 1732, 1317], ['3', 1678, 527],
];

const ChartArea = styled.section`
  position: relative;
  display: flex;
  align-items: center;
  justify-content: center;
  min-width: 0;
`;

const NatalLabel = styled.text<{ $axis: boolean }>`
  font: 400 25px ${sans};
  text-anchor: middle;
  dominant-baseline: central;
  fill: ${p => (p.$axis ? '#262626' : '#5c5c5c')};
`;

const TransitLabel = styled.text`
  font: 600 20px ${sans};
  text-anchor: middle;
  dominant-baseline: central;
  fill: #52627f;
`;

const RetroMark = styled.text`
  font: 600 18px ${sans};
  text-anchor: middle;
  dominant-baseline: central;
`;

const ViewSwitch = styled.div`
  position: absolute;
  top: 21px;
  right: 22px;
  padding: 6px;
  display: grid;
  gap: 6px;
  border-radius: 20px;
  background: #fdfdfb;
  box-shadow: 0 1px 6px rgba(40, 40, 60, 0.1);
`;

const ViewButton = styled.button<{ $active?: boolean }>`
  display: flex;
  align-items: center;
  justify-content: center;
  width: 52px;
  height: 52px;
  border: 2px solid ${p => (p.$active ? '#a4aabb' : 'transparent')};
  border-radius: 14px;
  background: ${p => (p.$active ? '#dfe0e4' : 'none')};
  color: #4c5870;
`;

function Wheel() {
  return (
    <svg width="1400" height="1400" viewBox="740 241 1400 1400" fill="none" role="img" aria-label="Natal and transit wheel">
      <circle cx={CX} cy={CY} r={R_OUTER} fill="#fafafa" />
      {ZODIAC.map(([, , fill], i) => (
        <path key={i} d={sector(i * 30, i * 30 + 30, R_TRANSIT, R_ZODIAC)} fill={fill} />
      ))}
      <circle cx={CX} cy={CY} r={R_TRANSIT} fill="#f3f5f6" />
      <circle cx={CX} cy={CY} r={R_NATAL} fill="#f9f9f9" />
      <circle cx={CX} cy={CY} r={R_CORE} fill="#fff" />
      <g stroke="#9a9fad">
        {Array.from({ length: 72 }, (_, i) => i * 5).filter(d => d % 30).map(d => (
          <path key={d} d={spoke(d, R_OUTER - (d % 10 ? 12 : 19), R_OUTER)} strokeWidth={d % 10 ? 1.5 : 3} />
        ))}
      </g>
      <g stroke="#d0d3d7" strokeWidth="2">
        <circle cx={CX} cy={CY} r={R_OUTER} />
        <circle cx={CX} cy={CY} r={R_ZODIAC} />
        <circle cx={CX} cy={CY} r={R_NATAL} />
        <circle cx={CX} cy={CY} r={R_CORE} strokeWidth="2.4" />
      </g>
      <circle cx={CX} cy={CY} r={R_TRANSIT} stroke="#a2a8b4" strokeWidth="3.4" />
      <circle cx={CX} cy={CY} r={R_TRANSIT} stroke="#d9dcdf" strokeWidth="1.8" />
      <g stroke="#9aa1b0" strokeWidth="3.4">
        {ZODIAC.map((_, i) => <path key={i} d={spoke(i * 30, R_TRANSIT, R_OUTER)} />)}
      </g>
      <g stroke="#9ea5b8" strokeWidth="1.8">
        {TRANSIT_CUSPS.map(d => <path key={d} d={spoke(d, R_NATAL, R_TRANSIT)} />)}
      </g>
      <g stroke="#96a0b0" strokeWidth="5">
        {[77.2, 169.6, 257.2, 349.6].map(d => <path key={d} d={spoke(d, R_NATAL, R_TRANSIT)} />)}
      </g>
      <g stroke="#726d65" strokeWidth="2.4">
        {NATAL_CUSPS.map(d => <path key={d} d={spoke(d, R_CORE, R_NATAL)} />)}
      </g>
      <g stroke="#0d0d0d" strokeWidth="5">
        {[0.5, 90.2, 180.5, 270.2].map(d => <path key={d} d={spoke(d, R_CORE, R_NATAL)} />)}
      </g>
      {ZODIAC.map(([name, color], i) => {
        if (!name) return null;
        const [x, y] = at(i * 30 + 15, 639);
        return <g key={name} transform={`translate(${x} ${y + 1})`} stroke={color} color={color} strokeWidth="2">{SIGNS[name].d}</g>;
      })}
      <g stroke="#c4c4c4" strokeWidth="1.2">
        {LEADERS.map(([x, y, tx, ty]) => <path key={`${x}-${y}`} d={`M${x} ${y} L${tx} ${ty}`} />)}
      </g>
      {TRANSIT_LABELS.map(([t, x, y]) => <TransitLabel key={t} x={x} y={y}>{t}</TransitLabel>)}
      {NATAL_LABELS.map(([t, x, y]) => <NatalLabel key={t} $axis={isNaN(Number(t))} x={x} y={y}>{t}</NatalLabel>)}
      {PLACED.map(([name, color, x, y, rx, ry]) => (
        <g key={`${name}-${x}`}>
          <g transform={`translate(${x} ${y}) scale(0.94)`} stroke={color} color={color} strokeWidth="2.4" strokeLinecap="round">{GLYPHS[name]}</g>
          {rx && <RetroMark x={rx} y={ry} fill={color}>R</RetroMark>}
        </g>
      ))}
      <g strokeWidth="3">
        <path d="M1264 696 L1458 724 M1487 729 L1682 758" stroke="#fb8383" strokeWidth="3.4" />
        <path d="M1264 696 L1207 813 M1194 840 L1138 957" stroke="#7edb9b" />
        <path d="M1264 696 L1287 941 M1291 971 L1315 1217" stroke="#80a9ff" strokeWidth="5" />
      </g>
      <g stroke="#fbb04e" strokeWidth="7">
        <path d="M1264 695 L1280 713 M1275 688 L1284 710" />
        <circle cx="1275" cy="687" r="3.5" strokeWidth="4" />
      </g>
      <g strokeWidth="1.4">
        <rect x="1465" y="719" width="14" height="14" stroke="#fb6b6b" />
        <path d="M1282 962 H1296 L1289 949Z" stroke="#5d8ffb" />
        <path d="M1195 825 H1206 M1197.5 820 L1203.5 830 M1203.5 820 L1197.5 830" stroke="#35c96a" />
        <circle cx="1290" cy="725" r="4" stroke={ORANGE} strokeWidth="1.8" />
        <path d="M1292 721 L1296 717" stroke={ORANGE} strokeWidth="1.8" />
      </g>
      <g fill="#fff" stroke="#a6a6a6" strokeWidth="1.6">
        {LEADERS.map(([x, y]) => <circle key={`${x}-${y}`} cx={x} cy={y} r="4.6" />)}
      </g>
      <g strokeWidth="2.4">
        <circle cx="1682" cy="758" r="4.6" stroke="#fb8383" />
        <circle cx="1138" cy="957" r="4.6" stroke="#7edb9b" />
        <circle cx="1315" cy="1217" r="4.6" stroke="#80a9ff" />
      </g>
    </svg>
  );
}

function Chart() {
  return (
    <ChartArea>
      <Wheel />
      <ViewSwitch>
        <ViewButton aria-label="Single wheel">
          <svg width="28" height="28" viewBox="0 0 28 28" fill="none" stroke="currentColor" strokeWidth="1.6"><circle cx="14" cy="14" r="13" /></svg>
        </ViewButton>
        <ViewButton $active aria-label="Double wheel">
          <svg width="28" height="28" viewBox="0 0 28 28" fill="none" stroke="currentColor" strokeWidth="1.6"><circle cx="14" cy="14" r="12" /><circle cx="14" cy="14" r="8" /></svg>
        </ViewButton>
      </ViewSwitch>
    </ChartArea>
  );
}

/* ---------- assistant dialog ---------- */

const Dialog = styled.section`
  position: absolute;
  top: 187px;
  right: 25px;
  bottom: 121px;
  width: 1082px;
  display: flex;
  flex-direction: column;
  border: 2px solid #e7e6ee;
  border-radius: 24px;
  background: #fefefe;
  box-shadow: 0 24px 80px rgba(30, 30, 40, 0.2), 0 4px 16px rgba(30, 30, 40, 0.08);
  overflow: hidden;
`;

const ResizeCorner = styled.span`
  position: absolute;
  left: 15px;
  top: 15px;
  width: 18px;
  height: 18px;
  border-left: 2px solid #c5c3bf;
  border-top: 2px solid #c5c3bf;
`;

const DialogHead = styled.header`
  display: flex;
  align-items: center;
  height: 81px;
  padding: 0 13px 2px 69px;
  background: linear-gradient(#fbfaf7, #fff);
  border-bottom: 2px solid #e8e8e6;
  color: ${muted};
`;

const DialogTitle = styled.h2`
  flex: 1;
  margin: 0 0 0 28px;
  font: 400 32px/40px ${serif};
  color: #1a1a1a;
`;

const BareButton = styled.button`
  display: flex;
  align-items: center;
  justify-content: center;
  width: 56px;
  height: 56px;
  margin-left: 9px;
  border: 0;
  background: none;
  color: ${muted};
`;

const DialogTabs = styled.div`
  display: grid;
  grid-template-columns: 1fr 1fr;
  gap: 10px;
  padding: 12px;
  background: #fbfaf7;
`;

const DialogTab = styled.button<{ $active?: boolean }>`
  height: 56px;
  border: 2px solid ${p => (p.$active ? '#e1e1ec' : 'transparent')};
  border-radius: 16px;
  background: ${p => (p.$active ? '#fff' : 'none')};
  font-size: 24px;
  font-weight: 600;
  color: ${p => (p.$active ? navy : soft)};
`;

const ContextBar = styled.button`
  display: flex;
  align-items: center;
  height: 77px;
  padding: 0 24px;
  border: 0;
  border-bottom: 2px solid #dddbd5;
  background: #efece5;
  font-size: 24px;
  text-align: left;
  color: ${soft};
`;

const ContextText = styled.span`
  flex: 1;
  margin-left: 8px;
  color: ${muted};
`;

const ContextLabel = styled.span`
  color: ${soft};
`;

const Thread = styled.div`
  display: flex;
  flex: 1;
  flex-direction: column;
  align-items: flex-start;
  gap: 12px;
  min-height: 0;
  padding: 17px;
  font-size: 24px;
  line-height: 39px;
`;

const Question = styled.p`
  align-self: flex-end;
  margin: 0;
  padding: 9px 16px 11px;
  border-radius: 18px 18px 4px 18px;
  background: ${navy};
  color: #fff;
`;

const Answer = styled.article`
  padding: 8px 16px 12px;
  border: 2px solid #e9e7e1;
  border-radius: 20px 20px 20px 4px;
  background: #f8f7f3;
`;

const AnswerTitle = styled.h3`
  margin: 0;
  font-size: 24px;
  font-weight: 600;
  line-height: 39px;
  color: #1a1a1a;
`;

const AnswerList = styled.ul`
  margin: 7px 0 0;
  padding-left: 37px;
`;

const Feedback = styled.form`
  display: flex;
  align-items: center;
  gap: 12px;
  margin-top: 10px;
`;

const Thumb = styled.button`
  width: 80px;
  height: 80px;
  border: 2px solid #e2e0da;
  border-radius: 18px;
  background: #f8f6f1;
  font-size: 26px;
`;

const Reason = styled.input`
  width: 287px;
  height: 64px;
  padding: 0 17px;
  border: 2px solid #e0deda;
  border-radius: 16px;
  background: #fff;
  font-size: 24px;
  outline: 0;
  &::placeholder { color: #7d7a75; opacity: 1; }
`;

const Submit = styled.button`
  width: 131px;
  height: 64px;
  border: 0;
  border-radius: 16px;
  background: ${navy};
  font-size: 24px;
  font-weight: 500;
  color: #fff;
`;

const Composer = styled.form`
  display: flex;
  align-items: center;
  gap: 10px;
  padding: 13px 85px 12px 11px;
  background: #fbfaf8;
  border-top: 2px solid #e9e8e5;
`;

const Prompt = styled.textarea`
  flex: 1;
  height: 66px;
  padding: 12px 18px;
  border: 2px solid #e6e8eb;
  border-radius: 18px;
  background: #fff;
  box-shadow: 0 0 0 6px #dadce0;
  font-size: 25px;
  line-height: 38px;
  outline: 0;
  resize: none;
  &::placeholder { color: #85807a; opacity: 1; }
`;

const Send = styled.button`
  display: flex;
  align-items: center;
  justify-content: center;
  width: 64px;
  height: 64px;
  border: 0;
  border-radius: 16px;
  background: ${navy};
  color: #fff;
`;

const PERIODS = [
  ['26 Feb 2025 20:42 — 14 Jul 2025 08:55', 'Exact: none', 'Station: 4 May 2025 08:26 R', 'Closest approach: 4 May 2025 08:26, orb 2.02°'],
  ['4 Jan 2026 14:05 — 10 Feb 2029 10:02', 'Exact:', '17 Feb 2027 11:29 D', '3 Aug 2027 04:48 R', '27 Dec 2027 05:03 D', 'Stations:',
    '6 May 2026 08:34 R', '15 Oct 2026 19:39 D', '8 May 2027 05:56 R', '17 Oct 2027 20:49 D', '9 May 2028 02:33 R', '18 Oct 2028 20:42 D'],
  ['18 Aug 2029 20:50 — 19 Dec 2029 08:01', 'Exact: none', 'Station: 20 Oct 2029 20:53 D', 'Closest approach: 20 Oct 2029 20:53, orb 2.21°'],
];

function Assistant() {
  return (
    <Dialog role="dialog" aria-labelledby="assistant-title">
      <DialogHead>
        <ResizeCorner />
        <svg width="16" height="18" viewBox="0 0 16 18" stroke="currentColor" strokeWidth="2.8"><path d="M0 2 H16 M0 9 H16 M0 16 H16" /></svg>
        <DialogTitle id="assistant-title">Ask about this chart</DialogTitle>
        <BareButton aria-label="New conversation">
          <svg width="22" height="22" viewBox="0 0 22 22" stroke="currentColor" strokeWidth="2.4"><path d="M11 0 V22 M0 11 H22" /></svg>
        </BareButton>
        <BareButton aria-label="Close">
          <svg width="16" height="16" viewBox="0 0 16 16" stroke="currentColor" strokeWidth="3"><path d="M1 1 L15 15 M15 1 L1 15" /></svg>
        </BareButton>
      </DialogHead>
      <DialogTabs role="tablist">
        <DialogTab role="tab" aria-selected $active>Ask about this chart</DialogTab>
        <DialogTab role="tab">Notes</DialogTab>
      </DialogTabs>
      <ContextBar aria-expanded={false}>
        <svg width="20" height="20" viewBox="0 0 20 20" fill="none" stroke="currentColor"><path d="M10 1 L19 10 L10 19 L1 10Z" strokeWidth="1.2" /><path d="M10 4 L16 10 L10 16 L4 10Z" fill="currentColor" stroke="none" /></svg>
        <ContextText><ContextLabel>Context</ContextLabel> — Maya Lindqvist · transit · P</ContextText>
        <svg width="12" height="20" viewBox="0 0 12 20" fill="none" stroke="currentColor" strokeWidth="1.6"><path d="M2 12 L6 19 L10 12" /></svg>
      </ContextBar>
      <Thread>
        <Question>When is transiting Pluto exactly conjunct natal Moon? Past and next 5 years</Question>
        <Answer>
          <AnswerTitle>Pluto conjunct Moon — past and next 5 years</AnswerTitle>
          {PERIODS.map(lines => (
            <AnswerList key={lines[0]}>{lines.map(l => <li key={l}>{l}</li>)}</AnswerList>
          ))}
          <Feedback onSubmit={e => e.preventDefault()}>
            <Thumb type="button" aria-label="Helpful">👍</Thumb>
            <Thumb type="button" aria-label="Not helpful">👎</Thumb>
            <Reason aria-label="What was wrong?" placeholder="What was wrong? (optional)" />
            <Submit>Submit</Submit>
          </Feedback>
        </Answer>
      </Thread>
      <Composer onSubmit={e => e.preventDefault()}>
        <Prompt aria-label="Ask about this chart" placeholder="Ask about this chart…" />
        <Send aria-label="Send">
          <svg width="14" height="26" viewBox="0 0 14 26" fill="none" stroke="currentColor" strokeWidth="1.8"><path d="M7 25 V2 M3 7 L7 2 L11 7" /></svg>
        </Send>
      </Composer>
    </Dialog>
  );
}

export default function App() {
  return (
    <>
      <GlobalStyle />
      <Page>
        <TopBar />
        <Main>
          <NatalPanel />
          <Chart />
          <TransitPanel />
        </Main>
        <Assistant />
      </Page>
    </>
  );
}
